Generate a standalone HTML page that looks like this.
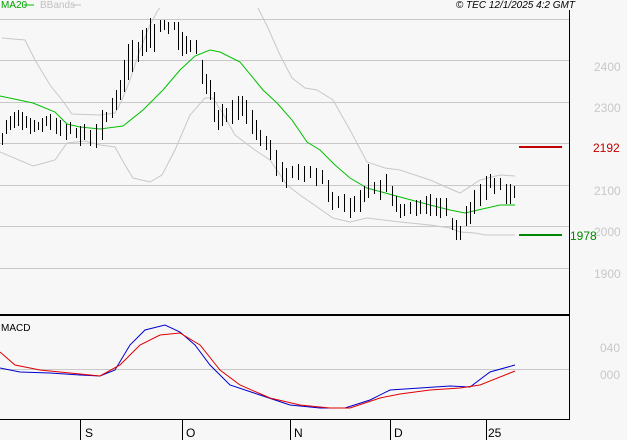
<!DOCTYPE html><html><head><style>
body{margin:0;width:627px;height:440px;background:#f7f7f7;overflow:hidden;font-family:"Liberation Sans",sans-serif}
svg{display:block}
</style></head><body>
<svg width="627" height="440" xmlns="http://www.w3.org/2000/svg" font-family="Liberation Sans, sans-serif">
<rect width="627" height="440" fill="#f7f7f7"/>
<g stroke="#c8c8c8" stroke-width="1">
<line x1="0" y1="19.5" x2="569" y2="19.5"/><line x1="0" y1="60.5" x2="569" y2="60.5"/>
<line x1="0" y1="102.5" x2="569" y2="102.5"/><line x1="0" y1="143.5" x2="569" y2="143.5"/>
<line x1="0" y1="185.5" x2="569" y2="185.5"/><line x1="0" y1="226.5" x2="569" y2="226.5"/>
<line x1="0" y1="268.5" x2="569" y2="268.5"/><line x1="0" y1="369.5" x2="569" y2="369.5"/>
</g>
<g fill="none" stroke="#c8c8c8" stroke-width="1">
<polyline points="2,38 25,40 35,60 50,85 62,100 72,114 100,115 115,113 122,100 130,80 140,50 150,25 158,10 160,8"/>
<polyline points="258,8 268,28 280,55 292,78 305,88 317,90 333,100 350,130 367,162 385,168 400,170 430,180 460,193 480,180 500,175 515,176"/>
<polyline points="0,152 33,166 55,160 67,143 85,141 100,145 115,147 125,165 133,178 150,182 162,175 175,150 190,115 205,98 213,98 222,112 235,135 255,150 270,160 287,185 300,195 333,218 350,222 367,218 400,222 430,225 450,228 460,232 475,233 485,235 515,235"/>
</g>
<polyline fill="none" stroke="#00c000" stroke-width="1" points="0,96 33,103 55,112 67,124 80,127 100,129 123,126 143,110 163,90 180,70 195,56 210,50 220,52 240,62 263,90 277,103 292,120 307,142 320,150 335,165 350,178 367,188 400,197 430,205 450,210 465,213 478,210 500,205 515,205"/>
<path stroke="#000" stroke-width="1" fill="none" d="M2.5 133V145M6.5 120V134M10.5 116V130M14.5 112V128M18.5 110V126M22.5 112V130M26.5 116V128M30.5 118V134M34.5 120V132M38.5 122V130M42.5 118V132M46.5 116V126M50.5 114V130M56.5 118V134M60.5 120V136M66.5 124V140M70.5 122V134M76.5 128V138M80.5 126V146M84.5 124V140M90.5 130V146M96.5 124V148M102.5 110V140M106.5 112V122M112.5 98V118M116.5 90V110M120.5 80V100M124.5 60V92M128.5 44V80M132.5 40V72M138.5 42V62M142.5 30V56M146.5 28V52M150.5 18V48M154.5 24V52M160.5 20V32M164.5 20V30M168.5 22V34M174.5 22V30M178.5 22V50M182.5 32V56M186.5 36V54M190.5 40V52M196.5 40V54M202.5 60V84M206.5 74V94M210.5 80V100M214.5 92V122M218.5 110V130M222.5 104V126M226.5 108V122M232.5 100V124M238.5 96V120M242.5 96V116M246.5 100V124M252.5 110V134M256.5 120V140M260.5 130V146M266.5 136V150M270.5 140V160M276.5 150V176M282.5 162V182M286.5 168V188M292.5 166V178M298.5 164V180M304.5 166V182M310.5 166V178M316.5 168V186M322.5 170V184M328.5 180V202M332.5 192V210M338.5 196V208M344.5 194V212M350.5 198V218M354.5 196V212M360.5 190V212M364.5 186V202M368.5 164V198M374.5 182V194M380.5 180V200M386.5 174V192M392.5 186V206M396.5 196V212M400.5 204V218M404.5 204V216M410.5 202V214M416.5 200V216M420.5 200V214M426.5 196V214M430.5 194V216M436.5 198V216M440.5 198V218M446.5 198V216M452.5 218V230M456.5 220V240M460.5 226V240M466.5 206V226M470.5 202V224M474.5 190V214M480.5 184V206M486.5 176V200M490.5 174V188M494.5 178V194M500.5 178V190M506.5 184V204M510.5 184V204M514.5 186V198"/>
<polyline fill="none" stroke="#0000d0" stroke-width="1" points="0,368 20,372 50,373 80,375 100,376 115,370 130,345 145,330 165,325 180,332 195,345 210,365 230,385 260,395 290,405 320,408 345,408 370,400 390,390 420,388 450,386 470,387 490,372 515,365"/>
<polyline fill="none" stroke="#e00000" stroke-width="1" points="0,352 15,365 40,370 80,374 100,376 120,365 140,345 160,335 180,333 200,345 220,370 240,385 270,398 300,405 330,408 350,408 380,398 400,394 430,390 460,388 480,385 515,371"/>
<line x1="519" y1="147" x2="562" y2="147" stroke="#c00000" stroke-width="2"/>
<line x1="519" y1="235" x2="562" y2="235" stroke="#008800" stroke-width="2"/>
<line x1="569.5" y1="10" x2="569.5" y2="420" stroke="#000"/>
<line x1="0" y1="315" x2="570" y2="315" stroke="#000" stroke-width="2"/>
<line x1="0" y1="419.5" x2="570" y2="419.5" stroke="#000"/>
<g stroke="#000"><line x1="80.5" y1="420" x2="80.5" y2="440"/><line x1="182.5" y1="420" x2="182.5" y2="440"/><line x1="290.5" y1="420" x2="290.5" y2="440"/><line x1="390.5" y1="420" x2="390.5" y2="440"/><line x1="486.5" y1="420" x2="486.5" y2="440"/></g>
<g font-size="12" fill="#000"><text x="85" y="437">S</text><text x="186" y="437">O</text><text x="294" y="437">N</text><text x="394" y="437">D</text><text x="488" y="437">25</text></g>
<g font-size="12" fill="#c8c8c8"><text x="594" y="71">2400</text><text x="594" y="112">2300</text><text x="594" y="195">2100</text><text x="594" y="236">2000</text><text x="594" y="278">1900</text><text x="600" y="352">040</text><text x="600" y="379">000</text></g>
<text x="593" y="152" font-size="12" fill="#c00000">2192</text>
<text x="570" y="240" font-size="12" fill="#008800">1978</text>
<text x="1" y="8" font-size="10" fill="#00a000">MA20</text>
<line x1="24" y1="5" x2="34" y2="5" stroke="#00c000" stroke-width="1"/>
<text x="40" y="8" font-size="10" fill="#c0c0c0">BBands</text>
<line x1="71" y1="5" x2="81" y2="5" stroke="#c0c0c0"/>
<text x="1" y="331" font-size="10" fill="#000">MACD</text>
<text x="575" y="8" font-size="10" font-style="italic" fill="#000" text-anchor="end">© TEC 12/1/2025 4:2 GMT</text>
</svg>
</body></html>
